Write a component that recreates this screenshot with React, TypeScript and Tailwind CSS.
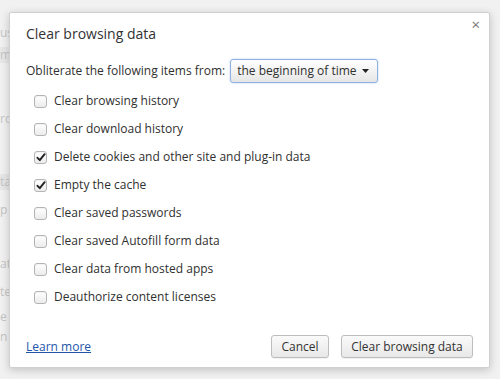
import React from 'react';

const items = [
    { label: 'Clear browsing history', checked: false },
    { label: 'Clear download history', checked: false },
    { label: 'Delete cookies and other site and plug-in data', checked: true },
    { label: 'Empty the cache', checked: true },
    { label: 'Clear saved passwords', checked: false },
    { label: 'Clear saved Autofill form data', checked: false },
    { label: 'Clear data from hosted apps', checked: false },
    { label: 'Deauthorize content licenses', checked: false },
];

const Checkbox: React.FC<{ checked: boolean }> = ({ checked }) => (
    <span className="w-[13px] h-[13px] rounded-[3px] border border-[#b4b4b4] bg-gradient-to-b from-white to-[#ececec] flex items-center justify-center shadow-[inset_0_1px_1px_rgba(0,0,0,0.05)]">
        {checked && (
            <svg width="10" height="9" viewBox="0 0 10 9">
                <path d="M1.5 4.8 L3.8 7.2 L8.6 1.2" fill="none" stroke="#222" strokeWidth="1.9" strokeLinecap="round" strokeLinejoin="round" />
            </svg>
        )}
    </span>
);

// faint page content peeking out behind the dialog
const Backdrop: React.FC = () => (
    <div className="w-[12px] flex flex-col items-start text-[12px] leading-[16px] text-[#c4c4c4] whitespace-nowrap">
        <div className="mt-[25px]">us</div>
        <div className="mt-[6px] w-full bg-[#e7e7e7]">m</div>
        <div className="mt-[48px]">ro</div>
        <div className="mt-[47px] w-full bg-[#e7e7e7]">ta</div>
        <div className="mt-[12px]">p</div>
        <div className="mt-[38px]">ati</div>
        <div className="mt-[12px]">te</div>
        <div className="mt-[9px]">e</div>
        <div className="mt-[4px]">n</div>
    </div>
);

const App: React.FC = () => {
    return (
        <div className="relative w-[500px] h-[379px] bg-[#f1f1f1] overflow-hidden" style={{ fontFamily: '"Open Sans", "Liberation Sans", sans-serif' }}>
            <Backdrop />

            <div className="absolute left-[9px] top-[12px] w-[481px] h-[356px] bg-white border border-[#d0d0d0] rounded-[2px] shadow-[0_2px_8px_rgba(0,0,0,0.2)] flex flex-col px-[16px] text-[#303030]">
                <button className="absolute right-[9px] top-[4px] text-[#777] text-[15px] leading-none">×</button>

                <h1 className="mt-[11px] h-[20px] text-[14px] leading-[20px] text-[#333]">Clear browsing data</h1>

                <div className="mt-[15px] h-[24px] flex items-center text-[12px]">
                    <span>Obliterate the following items from:</span>
                    <div className="ml-[5px] w-[148px] h-[24px] rounded-[3px] border border-[#8fb0e0] bg-gradient-to-b from-white to-[#e6e6e6] shadow-[0_0_2px_rgba(100,150,230,0.5)] flex items-center justify-between pl-[6px] pr-[8px] whitespace-nowrap">
                        <span>the beginning of time</span>
                        <svg width="7" height="4" viewBox="0 0 7 4"><path d="M0 0 H7 L3.5 4 Z" fill="#222" /></svg>
                    </div>
                </div>

                <div className="mt-[4px] flex flex-col pl-[8px]">
                    {items.map(item => (
                        <label key={item.label} className="h-[28px] flex items-center gap-[7px] text-[12px]">
                            <Checkbox checked={item.checked} />
                            <span>{item.label}</span>
                        </label>
                    ))}
                </div>

                <div className="mt-[24px] flex items-center justify-between">
                    <a className="text-[12px] text-[#2255aa] underline">Learn more</a>
                    <div className="flex gap-[12px]">
                        <button className="h-[23px] w-[58px] rounded-[3px] border border-[#bdbdbd] bg-gradient-to-b from-[#fafafa] to-[#e8e8e8] text-[12px] text-[#333] shadow-[0_1px_1px_rgba(0,0,0,0.06)]">Cancel</button>
                        <button className="h-[23px] w-[132px] rounded-[3px] border border-[#bdbdbd] bg-gradient-to-b from-[#fafafa] to-[#e8e8e8] text-[12px] text-[#333] shadow-[0_1px_1px_rgba(0,0,0,0.06)]">Clear browsing data</button>
                    </div>
                </div>
            </div>
        </div>
    );
};

export default App;
